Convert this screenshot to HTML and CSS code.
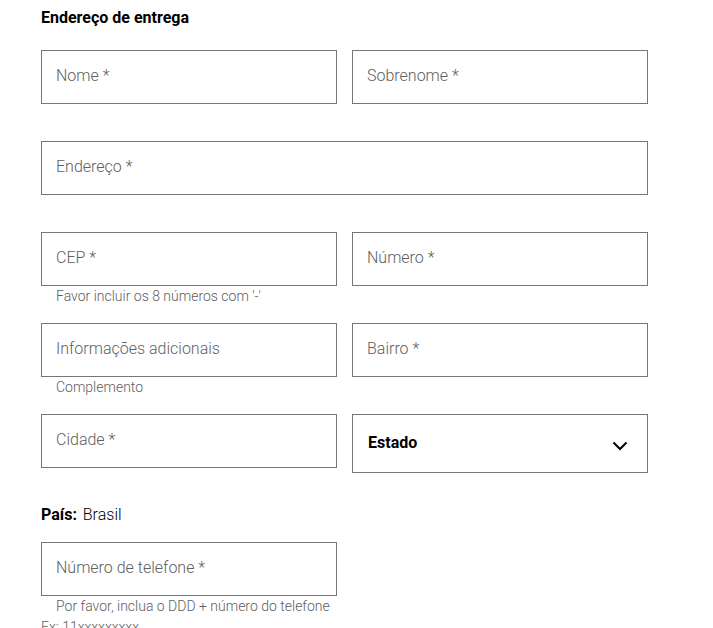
FILE: index.html
```html
<!DOCTYPE html>
<html lang="pt-BR">
<head>
<meta charset="utf-8">
<meta name="viewport" content="width=device-width, initial-scale=1">
<title>Endereço de entrega</title>
<link rel="stylesheet" href="styles.css">
</head>
<body>
<form class="address">
  <h2 class="title">Endereço de entrega</h2>
  <div class="fields">
    <div class="field">
      <div class="box"><label for="nome">Nome *</label><input id="nome" type="text" required></div>
    </div>
    <div class="field">
      <div class="box"><label for="sobrenome">Sobrenome *</label><input id="sobrenome" type="text" required></div>
    </div>
    <div class="field wide">
      <div class="box"><label for="endereco">Endereço *</label><input id="endereco" type="text" required></div>
    </div>
    <div class="field">
      <div class="box"><label for="cep">CEP *</label><input id="cep" type="text" required aria-describedby="cep-hint"></div>
      <p class="hint" id="cep-hint">Favor incluir os 8 números com '-'</p>
    </div>
    <div class="field">
      <div class="box"><label for="numero">Número *</label><input id="numero" type="text" required></div>
    </div>
    <div class="field">
      <div class="box"><label for="info">Informações adicionais</label><input id="info" type="text" aria-describedby="info-hint"></div>
      <p class="hint" id="info-hint">Complemento</p>
    </div>
    <div class="field">
      <div class="box"><label for="bairro">Bairro *</label><input id="bairro" type="text" required></div>
    </div>
    <div class="field">
      <div class="box"><label for="cidade">Cidade *</label><input id="cidade" type="text" required></div>
    </div>
    <div class="field">
      <div class="box">
        <select class="state" aria-label="Estado"><option>Estado</option></select>
        <svg class="chevron" viewBox="0 0 16 10" aria-hidden="true"><path d="M1.5 1.5 8 8l6.5-6.5" fill="none" stroke="currentColor" stroke-width="2"/></svg>
      </div>
    </div>
  </div>
  <p class="country"><strong>País:</strong> <span>Brasil</span></p>
  <div class="fields">
    <div class="field">
      <div class="box"><label for="telefone">Número de telefone *</label><input id="telefone" type="tel" required aria-describedby="tel-hint"></div>
      <p class="hint" id="tel-hint">Por favor, inclua o DDD + número do telefone<br>Ex: 11xxxxxxxxx</p>
    </div>
  </div>
</form>
</body>
</html>
```
FILE: styles.css
```css
* {
  box-sizing: border-box;
}

body {
  margin: 0;
  background: #fff;
  color: #000;
  font: 16px/20px Roboto, "Liberation Sans", sans-serif;
}

.address {
  padding: 8px 65px 0 41px;
}

.title {
  margin: 0 0 22px;
  font-size: 16px;
  font-weight: 700;
}

.fields {
  display: grid;
  grid-template-columns: 1fr 1fr;
  grid-auto-rows: minmax(91px, auto);
  column-gap: 15px;
}

.wide {
  grid-column: 1 / -1;
}

/* The label shares one grid cell with its control and lies over it. */
.box {
  display: grid;
}

.box > * {
  grid-area: 1 / 1;
}

label {
  z-index: 1;
  align-self: start;
  padding: 16px 15px;
  color: #606060;
  font-weight: 300;
  pointer-events: none;
}

input,
select {
  width: 100%;
  height: 54px;
  margin: 0;
  padding: 0 15px;
  border: 1px solid #767677;
  border-radius: 0;
  background: #fff;
  color: #000;
  font: inherit;
}

.state {
  height: 59px;
  padding-bottom: 2px;
  appearance: none;
  font-weight: 700;
}

.chevron {
  place-self: center end;
  width: 16px;
  height: 10px;
  margin: 4px 20px 0 0;
  pointer-events: none;
}

.hint {
  margin: 0;
  color: #606060;
  font-size: 14px;
  font-weight: 300;
  line-height: 21px;
  text-indent: 15px;
}

.country {
  margin: 0 0 17px;
  font-weight: 300;
}

.country strong {
  margin-right: 2px;
  font-weight: 700;
}
```
